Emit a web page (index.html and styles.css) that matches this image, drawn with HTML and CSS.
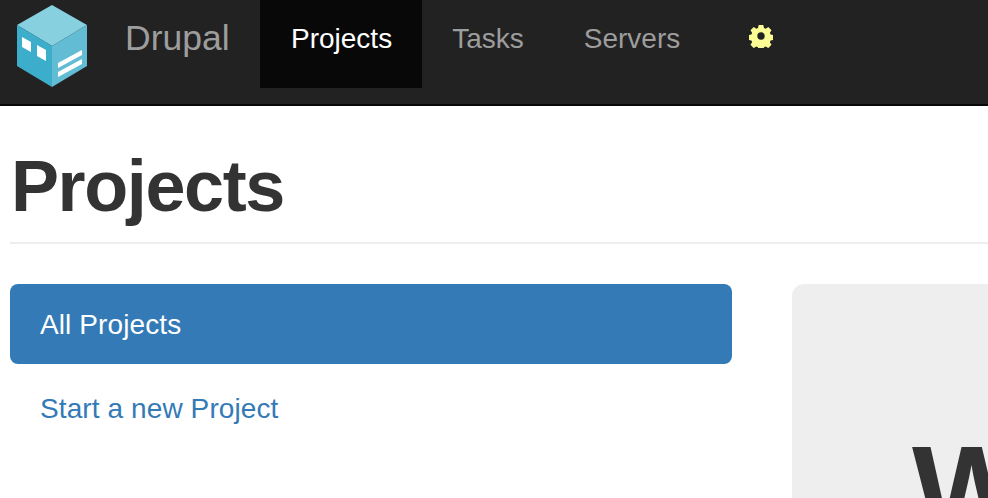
FILE: index.html
```html
<!DOCTYPE html>
<html lang="en">
<head>
    <meta charset="UTF-8">
    <title>Projects</title>
    <link rel="stylesheet" href="styles.css">
</head>
<body>

<nav class="navbar">
    <a class="logo" href="#">
        <svg width="70" height="82" viewBox="0 0 70 82">
            <polygon points="35,0 70,20 35,41 0,20" fill="#86d0e0"/>
            <polygon points="0,20 35,41 35,82 0,61" fill="#3caecb"/>
            <polygon points="35,41 70,20 70,61 35,82" fill="#62bdd4"/>
            <polygon points="5,32 14,37 14,47 5,42" fill="#fff"/>
            <polygon points="20,40 29,45 29,56 20,51" fill="#fff"/>
            <polygon points="41,58 65,45 65,50 41,63" fill="#fff"/>
            <polygon points="41,67 65,54 65,59 41,72" fill="#fff"/>
        </svg>
    </a>
    <a class="brand" href="#">Drupal</a>
    <ul class="nav">
        <li><a class="active" href="#">Projects</a></li>
        <li><a href="#">Tasks</a></li>
        <li><a href="#">Servers</a></li>
        <li>
            <a class="settings" href="#">
                <svg width="24" height="24" viewBox="0 0 26 26">
                    <path fill="#fdfd96" fill-rule="evenodd" d="M10.5 1h5l.7 3.3 1.9.8 2.8-1.8 3.5 3.5-1.8 2.8.8 1.9 3.3.7v5l-3.3.7-.8 1.9 1.8 2.8-3.5 3.5-2.8-1.8-1.9.8-.7 3.3h-5l-.7-3.3-1.9-.8-2.8 1.8-3.5-3.5 1.8-2.8-.8-1.9-3.3-.7v-5l3.3-.7.8-1.9-1.8-2.8 3.5-3.5 2.8 1.8 1.9-.8zM13 9a4 4 0 1 0 0 8 4 4 0 0 0 0-8z"/>
                </svg>
            </a>
        </li>
    </ul>
</nav>

<div class="container">
    <div class="page-header">
        <h1>Projects</h1>
    </div>

    <div class="row">
        <ul class="pills">
            <li><a class="active" href="#">All Projects</a></li>
            <li><a href="#">Start a new Project</a></li>
        </ul>
        <div class="jumbotron">
            <h1>Welcome</h1>
        </div>
    </div>
</div>

</body>
</html>
```

FILE: styles.css
```css
html, body {
    height: 100%;
    overflow: hidden;
}
body {
    font-family: "Liberation Sans", Arial, sans-serif;
    font-size: 28px;
    color: #333;
    background-color: #fff;
    margin: 0;
}
a {
    text-decoration: none;
}
ul {
    list-style: none;
    margin: 0;
    padding: 0;
}
.navbar {
    display: flex;
    height: 104px;
    background-color: #222;
    border-bottom: 2px solid #080808;
}
.logo {
    display: block;
    width: 125px;
    padding: 5px 0 0 17px;
    box-sizing: border-box;
}
.brand {
    width: 135px;
    font-size: 35.5px;
    line-height: 76px;
    color: #9d9d9d;
}
.nav {
    display: flex;
}
.nav a {
    display: block;
    height: 88px;
    padding: 0 30px;
    line-height: 78px;
    color: #9d9d9d;
}
.nav a.active {
    padding-left: 31px;
    color: #fff;
    background-color: #080808;
}
.nav a.settings {
    padding: 24px 0 0 39px;
    box-sizing: border-box;
    line-height: 0;
}
.container {
    padding: 0 10px;
}
.page-header {
    height: 138px;
    border-bottom: 2px solid #eee;
    box-sizing: border-box;
    padding-top: 30px;
    width: 1000px;
}
.page-header h1 {
    font-size: 72px;
    line-height: 100px;
    font-weight: bold;
    letter-spacing: -1.4px;
    margin: 0 0 0 1px;
}
.row {
    display: flex;
    gap: 60px;
    margin-top: 40px;
}
.pills {
    width: 722px;
    flex-shrink: 0;
}
.pills a {
    display: block;
    height: 80px;
    padding: 0 30px;
    line-height: 82px;
    margin-bottom: 4px;
    letter-spacing: 0.1px;
    color: #337ab7;
    border-radius: 8px;
}
.pills a.active {
    color: #fff;
    background-color: #337ab7;
}
.jumbotron {
    width: 800px;
    flex-shrink: 0;
    height: 600px;
    padding: 137px 120px 0;
    box-sizing: border-box;
    background-color: #eee;
    border-radius: 12px;
}
.jumbotron h1 {
    font-size: 126px;
    line-height: 140px;
    font-weight: bold;
    margin: 0;
}
```
